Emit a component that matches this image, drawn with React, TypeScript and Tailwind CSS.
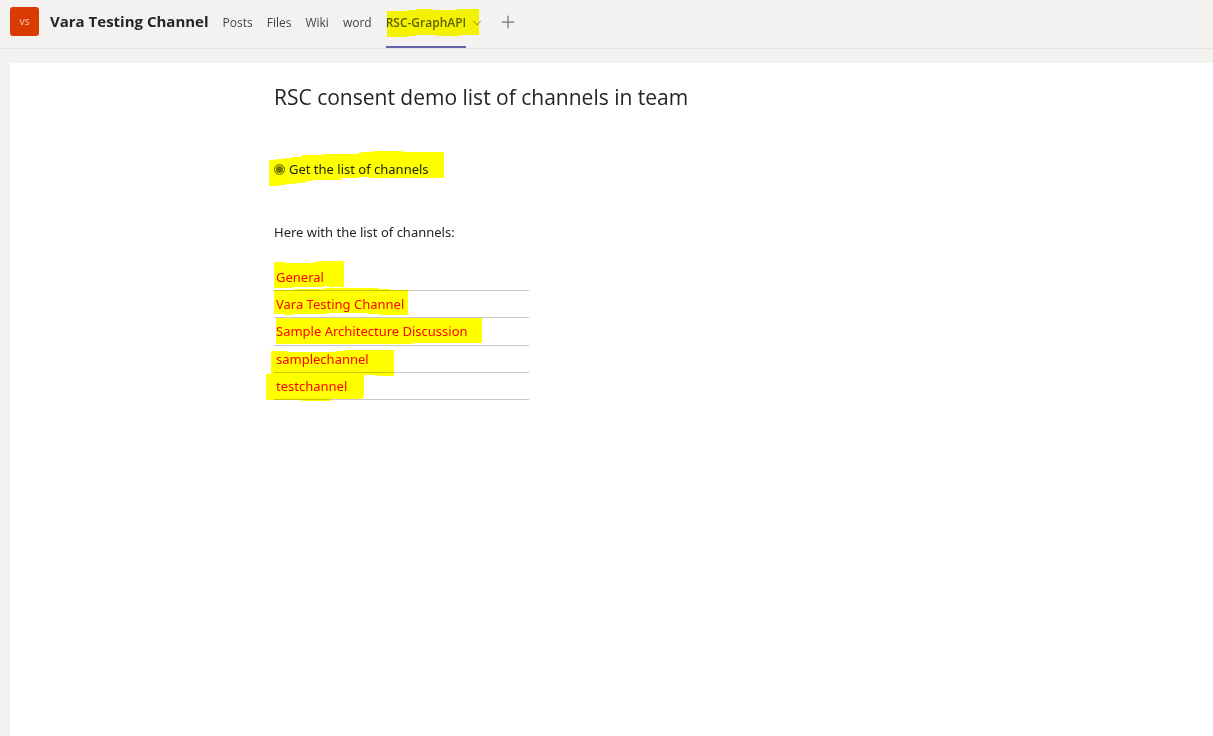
import { Plus, ChevronDown } from "lucide-react";

type Stroke = { viewBox: string; points: string; className: string };

const tabs = ["Posts", "Files", "Wiki", "word"];

const channels: { name: string; stroke: Stroke }[] = [
  {
    name: "General",
    stroke: {
      viewBox: "274 261 70 28",
      className: "left-0 -top-[3px] h-7 w-[70px]",
      points:
        "274,262 285,262 285,263 314,263 314,262 318,262 318,261 344,261 344,287 328,287 328,286 324,286 324,287 293,287 293,288 274,288",
    },
  },
  {
    name: "Vara Testing Channel",
    stroke: {
      viewBox: "274 288 134 28",
      className: "left-0 -top-[3px] h-7 w-[134px]",
      points:
        "274,290 293,290 293,289 324,289 324,288 378,288 378,289 390,289 390,290 408,290 408,315 380,315 380,314 367,314 367,313 327,313 327,314 293,314 293,315 274,314",
    },
  },
  {
    name: "Sample Architecture Discussion",
    stroke: {
      viewBox: "276 318 206 26",
      className: "left-0.5 top-0 h-[26px] w-[206px]",
      points: "276,318 482,318 482,343 413,343 413,344 276,344",
    },
  },
  {
    name: "samplechannel",
    stroke: {
      viewBox: "271 350 123 26",
      className: "-left-[3px] top-1 h-[26px] w-[123px]",
      points:
        "271,351 287,351 287,352 335,352 335,351 345,351 345,350 394,350 394,376 377,376 377,375 332,375 332,374 290,374 290,375 271,375",
    },
  },
  {
    name: "testchannel",
    stroke: {
      viewBox: "266 374 98 28",
      className: "-left-2 top-px h-7 w-[98px]",
      points:
        "266,374 364,374 364,398 362,398 362,399 330,399 330,401 301,401 301,400 266,400",
    },
  },
];

function Marker({ viewBox, points, className }: Stroke) {
  return (
    <svg
      aria-hidden="true"
      viewBox={viewBox}
      shapeRendering="crispEdges"
      className={`pointer-events-none absolute z-10 max-w-none mix-blend-multiply ${className}`}
    >
      <polygon points={points} fill="#ffff00" />
    </svg>
  );
}

export default function App() {
  return (
    <div className="flex min-h-screen flex-col bg-[#f3f2f1] font-['Open_Sans','Noto_Sans',sans-serif] text-[#212529]">
      <header className="flex h-[49px] items-start border-b border-[#e6e4e2] pl-2.5">
        <div className="mt-[7px] flex size-[29px] items-center justify-center rounded-[3px] bg-[#da3b01] text-[9px] font-semibold text-[#f3b49d]">
          VS
        </div>
        <h1 className="ml-[11px] flex h-[42px] items-center text-[15px] font-bold whitespace-nowrap text-[#252423]">
          Vara Testing Channel
        </h1>
        <nav className="ml-[14px] flex h-12 gap-[14px] text-[12px] text-[#484644]">
          {tabs.map((tab) => (
            <a key={tab} href={`#${tab}`} className="flex h-[45px] items-center">
              {tab}
            </a>
          ))}
          <div className="relative flex h-12 items-start">
            <a
              href="#rsc"
              aria-current="page"
              className="flex h-12 items-center border-b-2 border-[#6264a7] pb-px font-semibold text-[#605e5c]"
            >
              RSC-GraphAPI
            </a>
            <button type="button" aria-label="Tab options" className="ml-1 flex h-[45px] items-center">
              <ChevronDown size={14} strokeWidth={1.75} className="text-[#979593]" />
            </button>
            <Marker
              viewBox="387 9 92 28"
              className="left-px top-[9px] h-7 w-[92px]"
              points="387,11 407,11 407,10 416,10 416,9 433,9 433,10 457,10 457,9 479,9 479,35 460,35 460,36 437,36 437,35 417,35 417,36 409,36 409,37 387,37"
            />
          </div>
        </nav>
        <button type="button" aria-label="Add a tab" className="ml-[14px] flex h-11 items-center text-[#797775]">
          <Plus size={20} strokeWidth={1.5} />
        </button>
      </header>

      <main className="mt-[14px] ml-2.5 flex-1 bg-white pt-[18px] pl-[264px] font-['Noto_Sans','Open_Sans',sans-serif] text-[13px] leading-5">
        <h2 className="font-['Open_Sans','Noto_Sans',sans-serif] text-[21px] leading-8 font-medium">
          RSC consent demo list of channels in team
        </h2>

        <div className="relative mt-[46px] flex">
          <label className="flex items-center gap-1 text-[#212529]">
            <input
              type="radio"
              name="channels"
              defaultChecked
              className="size-[11px] appearance-none rounded-full border border-[#767676] bg-[#767676] shadow-[inset_0_0_0_1px_#ffffff]"
            />
            Get the list of channels
          </label>
          <Marker
            viewBox="269 151 175 35"
            className="-left-[5px] -top-2 h-[35px] w-[175px]"
            points="269,160 276,160 276,159 285,159 285,158 292,158 292,157 302,157 302,155 323,155 323,154 358,154 358,153 361,153 361,152 373,152 373,151 403,151 403,152 444,152 444,178 369,178 369,177 359,177 359,178 341,178 341,180 313,180 313,181 306,181 306,183 295,183 295,184 286,184 286,185 279,185 279,186 269,186"
          />
        </div>

        <p className="mt-[43px]">Here with the list of channels:</p>

        <ul className="mt-[22px] grid min-h-[136px] w-full max-w-[255px] auto-rows-fr text-[#ff0000]">
          {channels.map(({ name, stroke }) => (
            <li
              key={name}
              className="relative flex items-center border-b border-[#c8c8c8] pl-0.5 whitespace-nowrap"
            >
              {name}
              <Marker {...stroke} />
            </li>
          ))}
        </ul>
      </main>
    </div>
  );
}
